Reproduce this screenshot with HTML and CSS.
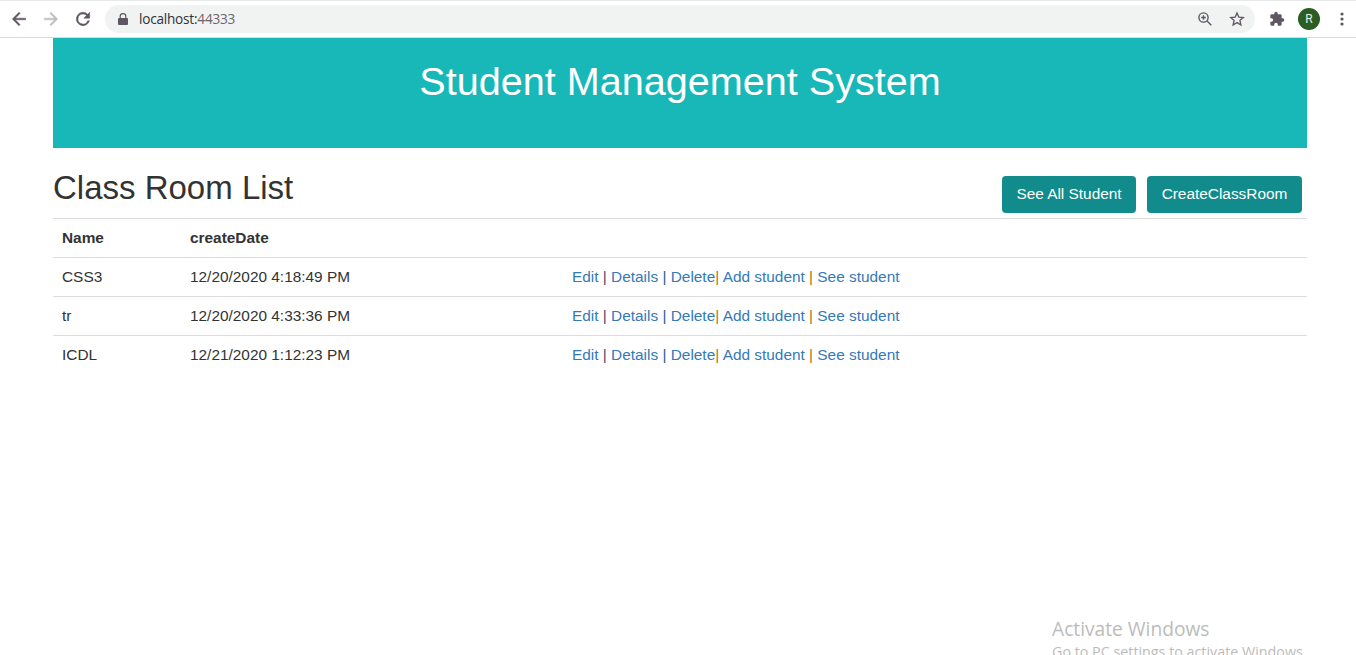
FILE: index.html
```html
<!DOCTYPE html>
<html lang="en">
<head>
<meta charset="utf-8">
<title>Student Management System</title>
<link rel="stylesheet" href="styles.css">
</head>
<body>
<header class="toolbar">
  <nav class="nav-icons">
    <svg class="icon" viewBox="0 0 24 24"><path d="M20 11H7.600l5.700-5.700L12 4l-8 8 8 8 1.300-1.300L7.600 13H20z" stroke="currentColor" stroke-width=".6"/></svg>
    <svg class="icon muted" viewBox="0 0 24 24"><path d="M4 11h12.400l-5.700-5.700L12 4l8 8-8 8-1.300-1.300 5.700-5.700H4z" stroke="currentColor" stroke-width=".6"/></svg>
    <svg class="icon" viewBox="0 0 24 24"><path d="M17.650 6.350A8 8 0 1 0 19.730 14h-2.080A6 6 0 1 1 12 6c1.660 0 3.140.69 4.220 1.780L13 11h7V4z" stroke="currentColor" stroke-width=".6"/></svg>
  </nav>
  <div class="address">
    <svg class="lock" viewBox="0 0 10 13"><path d="M1 5h8a1 1 0 0 1 1 1v5a1 1 0 0 1-1 1H1a1 1 0 0 1-1-1V6a1 1 0 0 1 1-1z"/><path d="M2.200 5V3.300a2.800 2.700 0 0 1 5.600 0V5" fill="none" stroke="currentColor" stroke-width="1.200"/></svg>
    <span class="url">localhost:<span class="port">44333</span></span>
    <svg class="small zoom-icon" viewBox="0 0 16 16" fill="none" stroke="currentColor" stroke-width="1.400"><circle cx="6.500" cy="6.500" r="4.600"/><path d="M10 10l4.300 4.300M4.200 6.500h4.600M6.500 4.200v4.600"/></svg>
    <svg class="small" viewBox="0 0 16 16" fill="none" stroke="currentColor" stroke-width="1.300"><path d="M8 1.900l1.800 4.200 4.500.4-3.400 3 1 4.500L8 11.600 4.100 14l1-4.500-3.400-3 4.500-.4z"/></svg>
  </div>
  <svg class="puzzle" viewBox="0 0 24 24"><path d="M20.500 11H19V7a2 2 0 0 0-2-2h-4V3.500a2.500 2.500 0 0 0-5 0V5H4a2 2 0 0 0-2 2v3.800h1.500a2.700 2.700 0 0 1 0 5.400H2V20a2 2 0 0 0 2 2h3.800v-1.500a2.700 2.700 0 0 1 5.400 0V22H17a2 2 0 0 0 2-2v-4h1.500a2.500 2.500 0 0 0 0-5z"/></svg>
  <span class="avatar">R</span>
  <svg class="menu" viewBox="0 0 4 14"><circle cx="2" cy="2" r="1.600"/><circle cx="2" cy="7" r="1.600"/><circle cx="2" cy="12" r="1.600"/></svg>
</header>
<main class="page">
  <div class="banner"><h1 class="banner-title">Student Management System</h1></div>
  <div class="heading">
    <h2 class="heading-title">Class Room List</h2>
    <div class="actions"><a class="button see">See All Student</a><a class="button create">CreateClassRoom</a></div>
  </div>
  <table class="rooms">
    <colgroup><col class="col-name"><col class="col-date"><col></colgroup>
    <tr><th>Name</th><th>createDate</th><th></th></tr>
    <tr><td>CSS3</td><td>12/20/2020 4:18:49 PM</td><td><a>Edit</a> <i class="bar-plum">|</i> <a>Details</a> <i class="bar-navy">|</i> <a>Delete</a><i class="bar-amber">|</i> <a>Add student</a> <i class="bar-amber">|</i> <a>See student</a></td></tr>
    <tr><td>tr</td><td>12/20/2020 4:33:36 PM</td><td><a>Edit</a> <i class="bar-plum">|</i> <a>Details</a> <i class="bar-navy">|</i> <a>Delete</a><i class="bar-amber">|</i> <a>Add student</a> <i class="bar-amber">|</i> <a>See student</a></td></tr>
    <tr><td>ICDL</td><td>12/21/2020 1:12:23 PM</td><td><a>Edit</a> <i class="bar-plum">|</i> <a>Details</a> <i class="bar-navy">|</i> <a>Delete</a><i class="bar-amber">|</i> <a>Add student</a> <i class="bar-amber">|</i> <a>See student</a></td></tr>
  </table>
</main>
<aside class="watermark"><div class="watermark-title">Activate Windows</div><div class="watermark-note">Go to PC settings to activate Windows.</div></aside>
</body>
</html>
```
FILE: styles.css
```css
* { box-sizing: border-box; }
body {
  margin: 0;
  height: 655px;
  overflow: hidden;
  background: #fff;
  color: #333;
  font: 15.4px/22px "Liberation Sans", Arial, sans-serif;
}
svg { display: block; flex: none; fill: currentColor; }
svg[fill="none"] { fill: none; }
.toolbar {
  display: flex;
  align-items: center;
  height: 38px;
  padding: 0 12px 0 9px;
  border-top: 1px solid #e8eaea;
  border-bottom: 1px solid #d9dadb;
  color: #5f5663;
}
.nav-icons { display: flex; gap: 12px; margin-right: 12px; }
.icon { width: 20px; height: 20px; }
.muted { color: #bdbdbd; }
.address {
  display: flex;
  align-items: center;
  width: 1150px;
  height: 28px;
  padding: 0 10px 0 13px;
  border-radius: 14px;
  background: #f1f3f3;
}
.lock { width: 10px; height: 13px; }
.url {
  flex: 1;
  margin-left: 11px;
  color: #303236;
  font: 13.6px/20px "Open Sans", "Noto Sans", sans-serif;
  letter-spacing: -0.22px;
}
.port { color: #6c6468; }
.small { width: 16px; height: 16px; }
.zoom-icon { margin-right: 16px; }
.puzzle { width: 16px; height: 16px; margin-left: 14px; }
.avatar {
  width: 22px;
  height: 22px;
  margin-left: 13px;
  border-radius: 50%;
  background: #2b5d24;
  color: #e9efe7;
  font: 12px/22px Roboto, sans-serif;
  text-align: center;
}
.menu { width: 4px; height: 14px; margin-left: 20px; }
.page { width: 1254px; margin-left: 53px; }
.banner {
  height: 110px;
  padding-top: 22px;
  background: #18b8b8;
  color: #fff;
  text-align: center;
}
.banner-title, .heading-title { margin: 0; font-weight: 400; white-space: nowrap; }
.banner-title { font-size: 39.6px; line-height: 43px; }
.heading {
  display: flex;
  justify-content: space-between;
  height: 70px;
  padding: 20px 5px 0 0;
}
.heading-title { font-size: 33px; line-height: 40px; }
.actions { display: flex; gap: 11px; padding-top: 8px; }
.button {
  height: 37px;
  border-radius: 4px;
  background: #118b8b;
  color: #fff;
  line-height: 35px;
  text-align: center;
}
.see { width: 134px; }
.create { width: 155px; }
.rooms { width: 100%; table-layout: fixed; border-collapse: separate; border-spacing: 0; }
.col-name { width: 128px; }
.col-date { width: 382px; }
.rooms th, .rooms td {
  height: 39px;
  padding: 0 9px;
  border-top: 1px solid #ddd;
  text-align: left;
  white-space: nowrap;
}
.rooms a { color: #337ab7; }
.rooms i { font-style: normal; }
.bar-plum { color: #59445f; }
.bar-navy { color: #29608f; }
.bar-amber { color: #b8701a; }
.watermark {
  position: absolute;
  left: 1052px;
  top: 616px;
  height: 39px;
  color: #bcbcba;
  font-family: "Open Sans", "Noto Sans", sans-serif;
  white-space: nowrap;
}
.watermark-title { font-size: 19.2px; line-height: 26px; }
.watermark-note { font-size: 14.3px; line-height: 20px; }
```
